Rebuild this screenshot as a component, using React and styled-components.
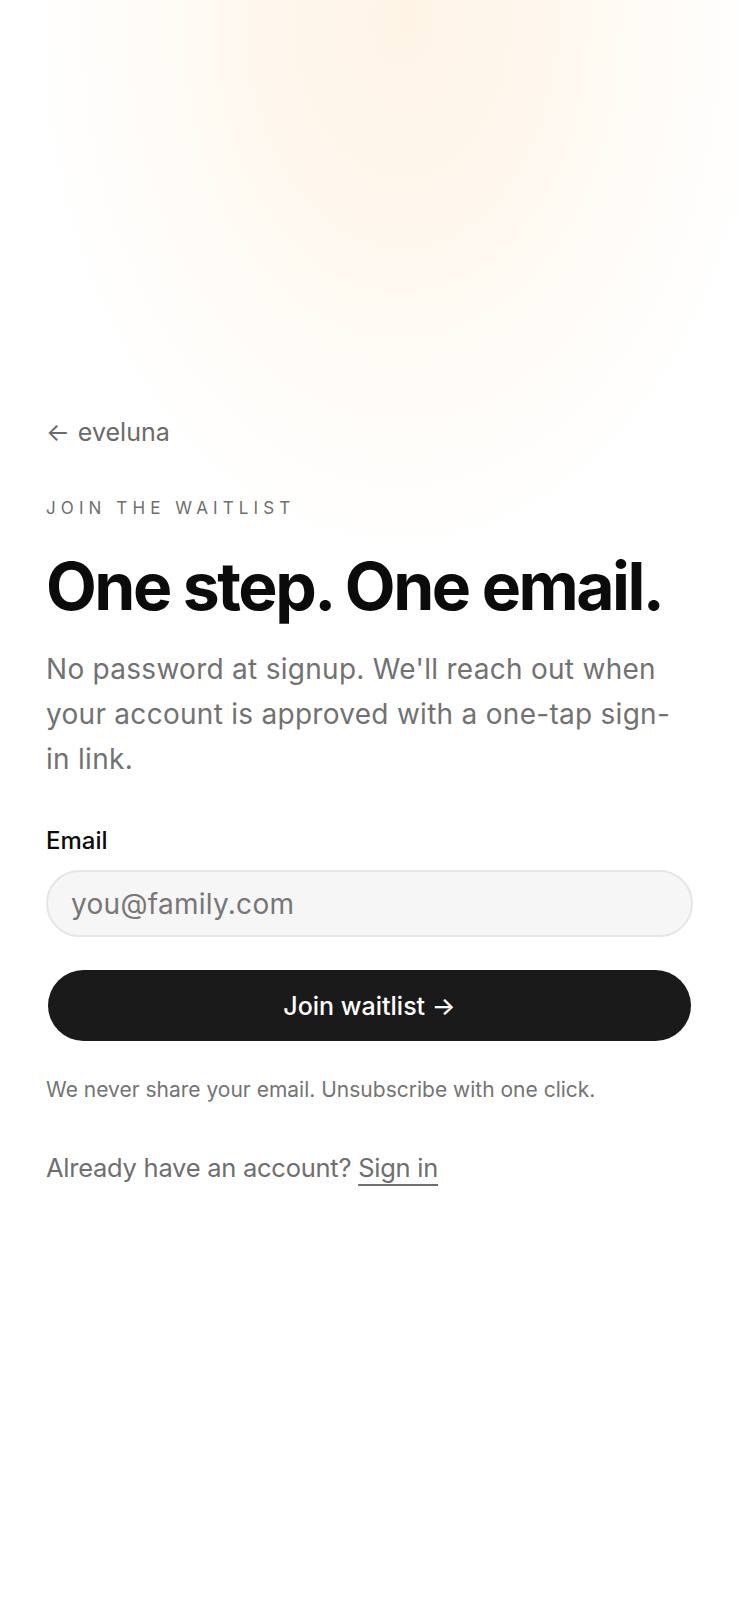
import styled, { createGlobalStyle } from "styled-components";

const GlobalStyle = createGlobalStyle`
  * {
    box-sizing: border-box;
  }

  body {
    margin: 0;
    background: #ffffff;
    font-family: "Inter", "Liberation Sans", sans-serif;
    -webkit-font-smoothing: antialiased;
  }
`;

// Kremová záře nahoře je jen pozadí stránky
const Page = styled.main`
  min-height: 1600px;
  padding: 416px 46px 80px;
  background: radial-gradient(
    ellipse 370px 540px at 402px 20px,
    #fff4e6 0%,
    #fff7ed 35%,
    #fffbf6 65%,
    #ffffff 100%
  );
`;

const BackLink = styled.a`
  display: inline-flex;
  align-items: center;
  gap: 8px;
  font-size: 25px;
  line-height: 32px;
  color: #6b6b6b;
  text-decoration: none;
`;

const Eyebrow = styled.p`
  margin: 50px 0 0;
  font-size: 17px;
  line-height: 20px;
  letter-spacing: 0.3em;
  text-transform: uppercase;
  color: #6f6f6f;
  font-weight: 400;
`;

const Title = styled.h1`
  margin: 28px 0 0;
  font-size: 66px;
  line-height: 80px;
  font-weight: 700;
  letter-spacing: -0.038em;
  color: #0b0b0b;
`;

const Lead = styled.p`
  margin: 21px 0 0;
  font-size: 28px;
  line-height: 45px;
  color: #727272;
  letter-spacing: 0.01em;
`;

const Form = styled.form`
  display: flex;
  flex-direction: column;
  margin-top: 44px;
`;

const Label = styled.label`
  font-size: 24px;
  line-height: 30px;
  font-weight: 500;
  color: #0b0b0b;
`;

const Input = styled.input`
  margin-top: 14px;
  width: 100%;
  height: 67px;
  padding: 0 23px;
  border: 2px solid #e6e6e6;
  border-radius: 999px;
  background: #f6f6f6;
  font-family: inherit;
  font-size: 28px;
  letter-spacing: 0.01em;
  color: #222;
  outline: none;

  &::placeholder {
    color: #777777;
  }
`;

const SubmitButton = styled.button`
  margin: 33px 2px 0;
  height: 71px;
  border: none;
  border-radius: 999px;
  background: #1a1a1a;
  color: #ffffff;
  font-family: inherit;
  font-size: 25px;
  font-weight: 500;
  cursor: pointer;
`;

const Note = styled.p`
  margin: 35px 0 0;
  font-size: 21px;
  line-height: 28px;
  color: #747474;
  letter-spacing: 0;
`;

const SignInRow = styled.p`
  margin: 47px 0 0;
  font-size: 25.5px;
  line-height: 34px;
  color: #6f6f6f;
  letter-spacing: -0.01em;
`;

const SignInLink = styled.a`
  color: #6f6f6f;
  text-decoration: underline;
  text-decoration-thickness: 2px;
  text-underline-offset: 7px;
`;

export default function App() {
  return (
    <>
      <GlobalStyle />
      <Page>
        <BackLink href="#">
          <span>←</span>
          <span>eveluna</span>
        </BackLink>
        <Eyebrow>Join the waitlist</Eyebrow>
        <Title>One step. One email.</Title>
        <Lead>
          No password at signup. We'll reach out when your account is approved
          with a one-tap sign-in link.
        </Lead>
        <Form onSubmit={(e) => e.preventDefault()}>
          <Label htmlFor="email">Email</Label>
          <Input id="email" type="email" placeholder="you@family.com" />
          <SubmitButton type="submit">Join waitlist →</SubmitButton>
        </Form>
        <Note>We never share your email. Unsubscribe with one click.</Note>
        <SignInRow>
          Already have an account? <SignInLink href="#">Sign in</SignInLink>
        </SignInRow>
      </Page>
    </>
  );
}
